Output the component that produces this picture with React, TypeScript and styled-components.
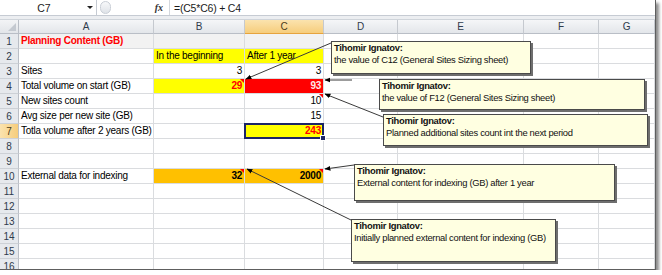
import styled, { createGlobalStyle } from 'styled-components';

const GlobalStyle = createGlobalStyle`
  html, body {
    margin: 0;
    padding: 0;
    background: #ffffff;
  }
  body {
    font-family: 'Liberation Sans', Arial, sans-serif;
  }
`;

type CellData = {
  text?: string;
  fill?: string;
  color?: string;
  bold?: boolean;
  right?: boolean;
  note?: boolean;
  selected?: boolean;
};

const COLS = ['A', 'B', 'C', 'D', 'E', 'F', 'G'];
const WIDTHS = [19, 135, 91, 79, 74, 126, 75, 56];

// only the cells that hold something, keyed by column letter
const SHEET: Record<number, Record<string, CellData>> = {
  1: {
    A: { text: 'Planning Content (GB)', color: '#ff0000', bold: true, fill: '#f2f2f2' },
    B: { fill: '#f2f2f2' },
    C: { fill: '#f2f2f2' },
  },
  2: {
    B: { text: 'In the beginning', fill: '#ffff00' },
    C: { text: 'After 1 year', fill: '#ffff00' },
  },
  3: {
    A: { text: 'Sites' },
    B: { text: '3', right: true },
    C: { text: '3', right: true },
  },
  4: {
    A: { text: 'Total volume on start (GB)' },
    B: { text: '29', right: true, fill: '#ffff00', color: '#ff0000', bold: true, note: true },
    C: { text: '93', right: true, fill: '#ff0000', color: '#ffe8e8', bold: true },
  },
  5: {
    A: { text: 'New sites count' },
    C: { text: '10', right: true, note: true },
  },
  6: {
    A: { text: 'Avg size per new site (GB)' },
    C: { text: '15', right: true },
  },
  7: {
    A: { text: 'Totla volume after 2 years (GB)' },
    C: { text: '243', right: true, fill: '#ffff00', color: '#ff0000', bold: true, selected: true },
  },
  10: {
    A: { text: 'External data for indexing' },
    B: { text: '32', right: true, fill: '#ffc000', bold: true, note: true },
    C: { text: '2000', right: true, fill: '#ffc000', bold: true, note: true },
  },
};

const NOTES = [
  { x: 331, y: 41, w: 200, h: 33, text: 'the value of C12 (General Sites Sizing sheet)' },
  { x: 379, y: 79, w: 266, h: 31, text: 'the value of F12 (General Sites Sizing sheet)' },
  { x: 383, y: 114, w: 265, h: 32, text: 'Planned additional sites count int the next period' },
  { x: 354, y: 164, w: 261, h: 37, text: 'External content for indexing (GB) after 1 year' },
  { x: 351, y: 219, w: 205, h: 43, text: 'Initially planned external content for indexing (GB)' },
];

const ARROWS = [
  { x1: 331, y1: 43, x2: 246, y2: 79 },
  { x1: 352, y1: 80, x2: 325, y2: 80 },
  { x1: 383, y1: 117, x2: 325, y2: 94 },
  { x1: 354, y1: 165, x2: 325, y2: 169 },
  { x1: 351, y1: 220, x2: 247, y2: 169 },
];

const ROWS = Array.from({ length: 16 }, (_, i) => i + 1);

const App = () => {
  return (
    <>
      <GlobalStyle />
      <Frame>
        <FormulaBar>
          <NameBox>
            C7
            <DropArrow />
          </NameBox>
          <Grip />
          <Fx>fx</Fx>
          <FormulaInput>=(C5*C6) + C4</FormulaInput>
        </FormulaBar>
        <BarGap />
        <Sheet>
          <Corner>
            <CornerMark />
          </Corner>
          {COLS.map((c) => (
            <ColHead key={c} $active={c === 'C'}>
              {c}
            </ColHead>
          ))}
          {ROWS.map((r) => (
            <Row key={`row-${r}`} r={r} />
          ))}
        </Sheet>

        <Arrows width={655} height={270}>
          <defs>
            <marker
              id="head"
              viewBox="0 0 10 10"
              refX="9"
              refY="5"
              markerWidth="6"
              markerHeight="6"
              orient="auto"
            >
              <path d="M0 1 L10 5 L0 9 z" fill="#000" />
            </marker>
          </defs>
          {ARROWS.map((a, idx) => (
            <line
              key={`arrow-${idx}`}
              x1={a.x1}
              y1={a.y1}
              x2={a.x2}
              y2={a.y2}
              stroke="#3a3a3a"
              strokeWidth={1}
              markerEnd="url(#head)"
            />
          ))}
        </Arrows>

        {NOTES.map((n, idx) => (
          <Note
            key={`note-${idx}`}
            style={{ left: n.x, top: n.y, width: n.w, height: n.h }}
          >
            <NoteAuthor>Tihomir Ignatov:</NoteAuthor>
            <div>{n.text}</div>
          </Note>
        ))}
      </Frame>
    </>
  );
};

const Row = ({ r }: { r: number }) => {
  const data = SHEET[r] || {};
  return (
    <>
      <RowHead $active={r === 7}>{r}</RowHead>
      {COLS.map((c) => {
        const cell = data[c] || {};
        return (
          <Cell
            key={`${c}${r}`}
            $fill={cell.fill}
            $color={cell.color}
            $bold={cell.bold}
            $right={cell.right}
            $selected={cell.selected}
          >
            {cell.text}
            {cell.note && <NoteMark />}
          </Cell>
        );
      })}
    </>
  );
};

export default App;

const Frame = styled.div`
  position: relative;
  width: 656px;
  height: 270px;
  overflow: hidden;
  border-right: 1px solid #5e5e5e;
  border-bottom: 1px solid #5e5e5e;
  box-shadow: 3px 3px 3px rgba(0, 0, 0, 0.45);
  background: #ffffff;
  box-sizing: border-box;
`;

const FormulaBar = styled.div`
  display: flex;
  align-items: stretch;
  height: 15px;
  background: #ffffff;
  border-bottom: 1px solid #c6cbd3;
  font-size: 10.5px;
  color: #1a1a1a;
`;

const NameBox = styled.div`
  position: relative;
  width: 97px;
  display: flex;
  align-items: center;
  justify-content: center;
  padding-right: 8px;
  box-sizing: border-box;
  border-right: 1px solid #c6cbd3;
`;

const DropArrow = styled.span`
  position: absolute;
  right: 3px;
  top: 6px;
  border-left: 3px solid transparent;
  border-right: 3px solid transparent;
  border-top: 3px solid #222;
`;

const Grip = styled.div`
  width: 9px;
  height: 11px;
  margin: 1px 0 0 3px;
  border: 1px solid #c9ced6;
  border-radius: 6px;
  background: linear-gradient(#f7f8fa, #dfe3e8);
`;

const Fx = styled.div`
  width: 58px;
  display: flex;
  align-items: center;
  justify-content: flex-end;
  padding-right: 6px;
  box-sizing: border-box;
  font-family: 'Liberation Serif', serif;
  font-style: italic;
  font-weight: bold;
  font-size: 10px;
  color: #333;
`;

const FormulaInput = styled.div`
  flex: 1;
  display: flex;
  align-items: center;
  padding-left: 4px;
  border-left: 1px solid #d4d8de;
  letter-spacing: -0.2px;
`;

const BarGap = styled.div`
  height: 3px;
  background: #eceef1;
  border-bottom: 1px solid #cfd4da;
`;

const Sheet = styled.div`
  display: grid;
  grid-template-columns: ${WIDTHS.map((w) => `${w}px`).join(' ')};
  grid-template-rows: 14px;
  grid-auto-rows: 15px;
  font-size: 10px;
  letter-spacing: -0.25px;
`;

const Corner = styled.div`
  position: relative;
  background: linear-gradient(#f3f4f6, #e2e5e9);
  border-right: 1px solid #b9bec6;
  border-bottom: 1px solid #b9bec6;
  box-sizing: border-box;
`;

const CornerMark = styled.span`
  position: absolute;
  right: 2px;
  bottom: 2px;
  border-left: 8px solid transparent;
  border-bottom: 8px solid #c4c9d0;
`;

const ColHead = styled.div<{ $active?: boolean }>`
  display: flex;
  align-items: center;
  justify-content: center;
  box-sizing: border-box;
  color: ${({ $active }) => ($active ? '#4a3c1c' : '#2f3b4c')};
  background: ${({ $active }) =>
    $active
      ? 'linear-gradient(#fbe3ae, #f6cd7c)'
      : 'linear-gradient(#f5f6f8, #e3e6ea)'};
  border-right: 1px solid #c5c9cf;
  border-bottom: 1px solid ${({ $active }) => ($active ? '#e6a33d' : '#b9bec6')};
`;

const RowHead = styled.div<{ $active?: boolean }>`
  display: flex;
  align-items: center;
  justify-content: center;
  box-sizing: border-box;
  font-size: 10px;
  letter-spacing: 0;
  color: ${({ $active }) => ($active ? '#4a3c1c' : '#2f3b4c')};
  background: ${({ $active }) =>
    $active ? 'linear-gradient(90deg, #fbe3ae, #f6cd7c)' : '#e6e9ed'};
  border-right: 1px solid #b9bec6;
  border-bottom: 1px solid #cdd1d6;
`;

const Cell = styled.div<{
  $fill?: string;
  $color?: string;
  $bold?: boolean;
  $right?: boolean;
  $selected?: boolean;
}>`
  position: relative;
  display: flex;
  align-items: flex-end;
  justify-content: ${({ $right }) => ($right ? 'flex-end' : 'flex-start')};
  box-sizing: border-box;
  padding: 0 2px 1px 2px;
  line-height: 13px;
  white-space: nowrap;
  overflow: visible;
  background: ${({ $fill }) => $fill || '#ffffff'};
  color: ${({ $color }) => $color || '#000000'};
  font-weight: ${({ $bold }) => ($bold ? 'bold' : 'normal')};
  border-right: 1px solid #dadcdf;
  border-bottom: 1px solid #dadcdf;

  ${({ $selected }) =>
    $selected &&
    `
    &::after {
      content: '';
      position: absolute;
      left: -1px;
      top: -1px;
      right: -1px;
      bottom: -1px;
      border: 2px solid #1c2566;
    }
    &::before {
      content: '';
      position: absolute;
      right: -3px;
      bottom: -3px;
      width: 4px;
      height: 4px;
      background: #1c2566;
      border: 1px solid #ffffff;
      z-index: 1;
    }
  `}
`;

const NoteMark = styled.span`
  position: absolute;
  top: 0;
  right: 0;
  border-left: 4px solid transparent;
  border-top: 4px solid #ff0000;
`;

const Arrows = styled.svg`
  position: absolute;
  left: 0;
  top: 0;
  pointer-events: none;
`;

const Note = styled.div`
  position: absolute;
  box-sizing: border-box;
  padding: 0 2px;
  background: #ffffe1;
  border: 1px solid #4a4a4a;
  box-shadow: 2px 2px 0 #6e6e6e;
  font-size: 9.4px;
  line-height: 12px;
  letter-spacing: -0.3px;
  color: #111;
`;

const NoteAuthor = styled.div`
  font-weight: bold;
`;
